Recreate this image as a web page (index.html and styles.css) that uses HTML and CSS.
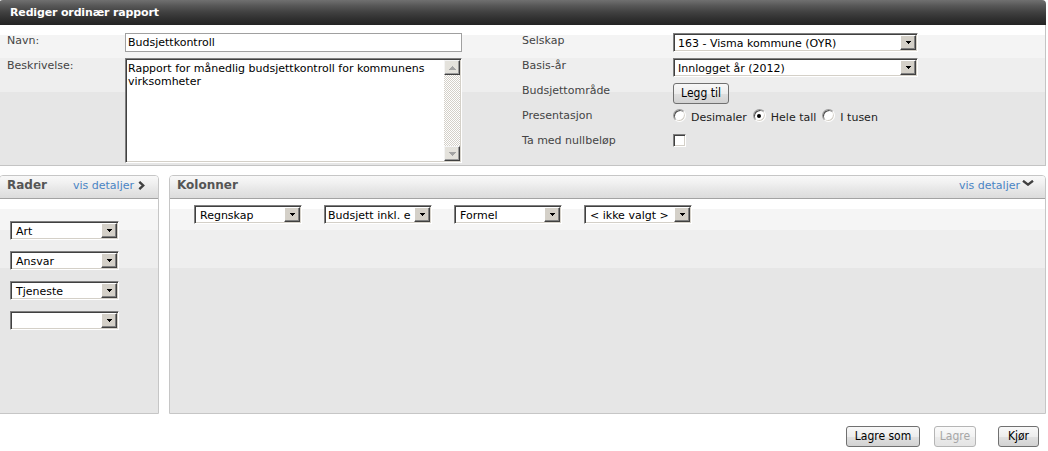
FILE: index.html
```html
<!DOCTYPE html>
<html lang="no">
<head>
<meta charset="utf-8">
<title>Rediger ordinær rapport</title>
<link rel="stylesheet" href="styles.css">
</head>
<body>
<div class="page">
  <section class="main">
    <header class="main-head">Rediger ordinær rapport</header>
    <div class="main-body">
      <div class="lform">
        <div class="lbl">Navn:</div>
        <div class="input">Budsjettkontroll</div>
        <div class="lbl">Beskrivelse:</div>
        <div class="textarea">
          <div class="ta-text">Rapport for månedlig budsjettkontroll for kommunens<br>virksomheter</div>
          <div class="scrollbar">
            <div class="sb-btn"><svg width="7" height="4" viewBox="0 0 7 4"><path d="M3 0h1v1h1v1h1v1h1v1H0V3h1V2h1V1h1z" fill="#a3a3a3"/></svg></div>
            <div class="sb-track"></div>
            <div class="sb-btn"><svg width="7" height="4" viewBox="0 0 7 4"><path d="M0 0h7v1H6v1H5v1H4v1H3V3H2V2H1V1H0z" fill="#a3a3a3"/></svg></div>
          </div>
        </div>
      </div>
      <div class="rform">
        <div class="lbl">Selskap</div>
        <div class="sel w-top"><span class="sel-text pad3">163 - Visma kommune (OYR)</span><span class="sel-btn"><svg width="5" height="3" viewBox="0 0 5 3"><path d="M0 0h5v1H4v1H3v1H2V2H1V1H0z"/></svg></span></div>
        <div class="lbl">Basis-år</div>
        <div class="sel w-top"><span class="sel-text pad3">Innlogget år (2012)</span><span class="sel-btn"><svg width="5" height="3" viewBox="0 0 5 3"><path d="M0 0h5v1H4v1H3v1H2V2H1V1H0z"/></svg></span></div>
        <div class="lbl">Budsjettområde</div>
        <div><button class="btn w-legg" type="button">Legg til</button></div>
        <div class="lbl">Presentasjon</div>
        <div class="radios">
          <span class="radio"></span><span class="rtxt">Desimaler</span>
          <span class="radio checked"></span><span class="rtxt">Hele tall</span>
          <span class="radio"></span><span class="rtxt">I tusen</span>
        </div>
        <div class="lbl">Ta med nullbeløp</div>
        <div><span class="check"></span></div>
      </div>
    </div>
  </section>

  <div class="lower">
    <section class="panel rader">
      <div class="phead">
        <span class="ptitle">Rader</span>
        <span class="link">vis detaljer<svg class="chev-r" width="7" height="9" viewBox="0 0 7 9"><path d="M1.3 0.8 5.2 4.5 1.3 8.2" fill="none" stroke="#404040" stroke-width="2.4"/></svg></span>
      </div>
      <div class="pbody rbody">
        <div class="sel w-row"><span class="sel-text">Art</span><span class="sel-btn"><svg width="5" height="3" viewBox="0 0 5 3"><path d="M0 0h5v1H4v1H3v1H2V2H1V1H0z"/></svg></span></div>
        <div class="sel w-row"><span class="sel-text">Ansvar</span><span class="sel-btn"><svg width="5" height="3" viewBox="0 0 5 3"><path d="M0 0h5v1H4v1H3v1H2V2H1V1H0z"/></svg></span></div>
        <div class="sel w-row"><span class="sel-text">Tjeneste</span><span class="sel-btn"><svg width="5" height="3" viewBox="0 0 5 3"><path d="M0 0h5v1H4v1H3v1H2V2H1V1H0z"/></svg></span></div>
        <div class="sel w-row"><span class="sel-text"></span><span class="sel-btn"><svg width="5" height="3" viewBox="0 0 5 3"><path d="M0 0h5v1H4v1H3v1H2V2H1V1H0z"/></svg></span></div>
      </div>
    </section>
    <section class="panel kolonner">
      <div class="phead">
        <span class="ptitle">Kolonner</span>
        <span class="link">vis detaljer<svg class="chev-d" width="12" height="6" viewBox="0 0 12 6"><path d="M1 0.8 6 4.6 11 0.8" fill="none" stroke="#404040" stroke-width="2.4"/></svg></span>
      </div>
      <div class="pbody kbody">
        <div class="sel w-col"><span class="sel-text">Regnskap</span><span class="sel-btn"><svg width="5" height="3" viewBox="0 0 5 3"><path d="M0 0h5v1H4v1H3v1H2V2H1V1H0z"/></svg></span></div>
        <div class="sel w-col"><span class="sel-text pad2">Budsjett inkl. e</span><span class="sel-btn"><svg width="5" height="3" viewBox="0 0 5 3"><path d="M0 0h5v1H4v1H3v1H2V2H1V1H0z"/></svg></span></div>
        <div class="sel w-col"><span class="sel-text">Formel</span><span class="sel-btn"><svg width="5" height="3" viewBox="0 0 5 3"><path d="M0 0h5v1H4v1H3v1H2V2H1V1H0z"/></svg></span></div>
        <div class="sel w-col"><span class="sel-text">&lt; ikke valgt &gt;</span><span class="sel-btn"><svg width="5" height="3" viewBox="0 0 5 3"><path d="M0 0h5v1H4v1H3v1H2V2H1V1H0z"/></svg></span></div>
      </div>
    </section>
  </div>

  <div class="actions">
    <button class="btn w-lagresom" type="button">Lagre som</button>
    <button class="btn w-lagre" type="button" disabled>Lagre</button>
    <button class="btn w-kjor" type="button">Kjør</button>
  </div>
</div>
</body>
</html>
```
FILE: styles.css
```css
* { box-sizing: border-box; }
html, body { margin: 0; background: #fff; }
body {
  font: 11px/13px "DejaVu Sans", "Liberation Sans", sans-serif;
  color: #000;
}
.page { width: 1047px; margin-left: -1px; }

/* main panel */
.main { border-radius: 4px 4px 0 0; overflow: hidden; }
.main-head {
  height: 25px;
  padding: 1px 0 0 11px;
  line-height: 24px;
  font-weight: bold;
  letter-spacing: -0.15px;
  color: #fff;
  background: linear-gradient(#707070 0, #555 25%, #404040 50%, #303030 75%, #242424 100%);
}
.main-body {
  display: flex;
  height: 141px;
  border: 1px solid #c4c4c4;
  border-top: 0;
  padding: 8px 0 0 7px;
  background: linear-gradient(to bottom, #fff 0 10px, #f4f4f4 10px 33px, #eeeeee 33px 67px, #e6e6e6 67px);
}
.lform {
  display: grid;
  grid-template-columns: 118px 337px;
  grid-template-rows: 19px 105px;
  row-gap: 6px;
  align-content: start;
}
.lbl { color: #444; padding-top: 1px; }
.rform {
  margin-left: 60px;
  display: grid;
  grid-template-columns: 151px 245px;
  grid-auto-rows: 25px;
  align-content: start;
}

.input {
  height: 19px;
  border: 1px solid #a0a0a0;
  background: #fff;
  padding: 0 2px;
  line-height: 17px;
}

.textarea {
  display: flex;
  height: 105px;
  background: #fff;
  border: 1px solid;
  border-color: #808080 #fff #fff #808080;
  padding: 1px;
  box-shadow: inset 1px 1px 0 #404040, inset -1px -1px 0 #d4d0c8;
}
.ta-text { flex: 1; padding: 2px 0 0 1px; white-space: nowrap; overflow: hidden; }
.scrollbar { width: 16px; display: flex; flex-direction: column; }
.sb-btn {
  height: 15px;
  display: flex;
  align-items: center;
  justify-content: center;
  background: #e4e2dc;
  border: 1px solid;
  border-color: #f4f4f4 #404040 #404040 #f4f4f4;
  box-shadow: inset -1px -1px 0 #9a9a9a;
}
.sb-track {
  flex: 1;
  background: repeating-conic-gradient(#d4d0c8 0 25%, #fff 0 50%) 0 0 / 2px 2px;
}

/* select look-alike */
.sel {
  display: flex;
  height: 19px;
  background: #fff;
  border: 1px solid;
  border-color: #808080 #fff #fff #808080;
  padding: 1px;
  box-shadow: inset 1px 1px 0 #404040, inset -1px -1px 0 #d4d0c8;
}
.sel-text {
  flex: 1;
  min-width: 0;
  overflow: hidden;
  white-space: nowrap;
  padding: 1px 0 0 4px;
  line-height: 15px;
}
.sel-text.pad3 { padding-left: 3px; }
.sel-text.pad2 { padding-left: 2px; }
.sel-btn {
  width: 16px;
  flex: none;
  display: flex;
  align-items: center;
  justify-content: center;
  background: #d4d0c8;
  border: 1px solid;
  border-color: #fff #404040 #404040 #fff;
  box-shadow: inset -1px -1px 0 #808080;
}
.sel-btn svg { display: block; fill: #000; }
.w-top { width: 245px; }
.w-row { width: 109px; }
.w-col { width: 108px; }

/* buttons */
.btn {
  height: 21px;
  padding: 0;
  border: 1px solid #707070;
  border-radius: 3px;
  background: linear-gradient(#f8f8f8, #ededed 50%, #e0e0e0 51%, #d2d2d2);
  color: #000;
  font: 12px/17px "DejaVu Sans Condensed", "DejaVu Sans", sans-serif;
  font-stretch: condensed;
}
.btn:disabled {
  color: #a6a6a6;
  border-color: #b5b5b5;
  background: linear-gradient(#fafafa, #f2f2f2 50%, #ebebeb 51%, #e4e4e4);
}
.w-legg { width: 56px; }
.w-lagresom { width: 74px; margin-right: 14px; }
.w-lagre { width: 42px; margin-right: 22px; }
.w-kjor { width: 41px; }

/* radios and checkbox */
.radios { display: flex; align-items: flex-start; }
.radio {
  position: relative;
  width: 13px;
  height: 13px;
  margin-top: 1px;
  border-radius: 50%;
  background: #fff;
  border: 1px solid;
  border-color: #9a9a9a #fff #fff #9a9a9a;
  box-shadow: inset 1px 1px 0 #505050, inset -1px -1px 0 #d4d0c8;
  flex: none;
}
.radio.checked::after {
  content: "";
  position: absolute;
  left: 3.5px;
  top: 3.5px;
  width: 4px;
  height: 4px;
  border-radius: 50%;
  background: #000;
}
.rtxt { color: #222; padding: 3px 0 0 5px; margin-right: 6px; }
.check {
  display: block;
  width: 13px;
  height: 13px;
  margin-top: 1px;
  background: #fff;
  border: 1px solid;
  border-color: #808080 #fff #fff #808080;
  box-shadow: inset 1px 1px 0 #404040, inset -1px -1px 0 #d4d0c8;
}

/* lower panels */
.lower { display: flex; gap: 10px; margin-top: 9px; }
.panel {
  height: 239px;
  border: 1px solid #c6c6c6;
  border-radius: 4px 4px 0 0;
  display: flex;
  flex-direction: column;
  overflow: hidden;
}
.rader { width: 160px; flex: none; }
.kolonner { flex: 1; }
.phead {
  height: 23px;
  flex: none;
  display: flex;
  align-items: baseline;
  padding: 0 13px 0 7px;
  line-height: 19px;
  border-bottom: 1px solid #a3a3a3;
  background: linear-gradient(#f8f8f8 0, #f1f1f1 30%, #e7e7e7 60%, #dcdcdc 100%);
}
.kolonner .phead { padding-right: 11px; }
.ptitle { font-weight: bold; font-size: 12px; color: #555; }
.link { margin-left: auto; color: #4a84c4; white-space: nowrap; }
.chev-r { margin-left: 4px; vertical-align: -1px; }
.chev-d { margin-left: 2px; vertical-align: 3px; }
.pbody {
  flex: 1;
  background: linear-gradient(to bottom, #fff 0 10px, #f5f5f5 10px 31px, #eeeeee 31px 69px, #e6e6e6 69px);
}
.rbody { display: flex; flex-direction: column; gap: 11px; padding: 22px 0 0 10px; }
.kbody { display: flex; align-items: flex-start; gap: 22px; padding: 6px 0 0 24px; }

.actions {
  display: flex;
  justify-content: flex-end;
  margin-top: 12px;
  padding-right: 7px;
}
```
